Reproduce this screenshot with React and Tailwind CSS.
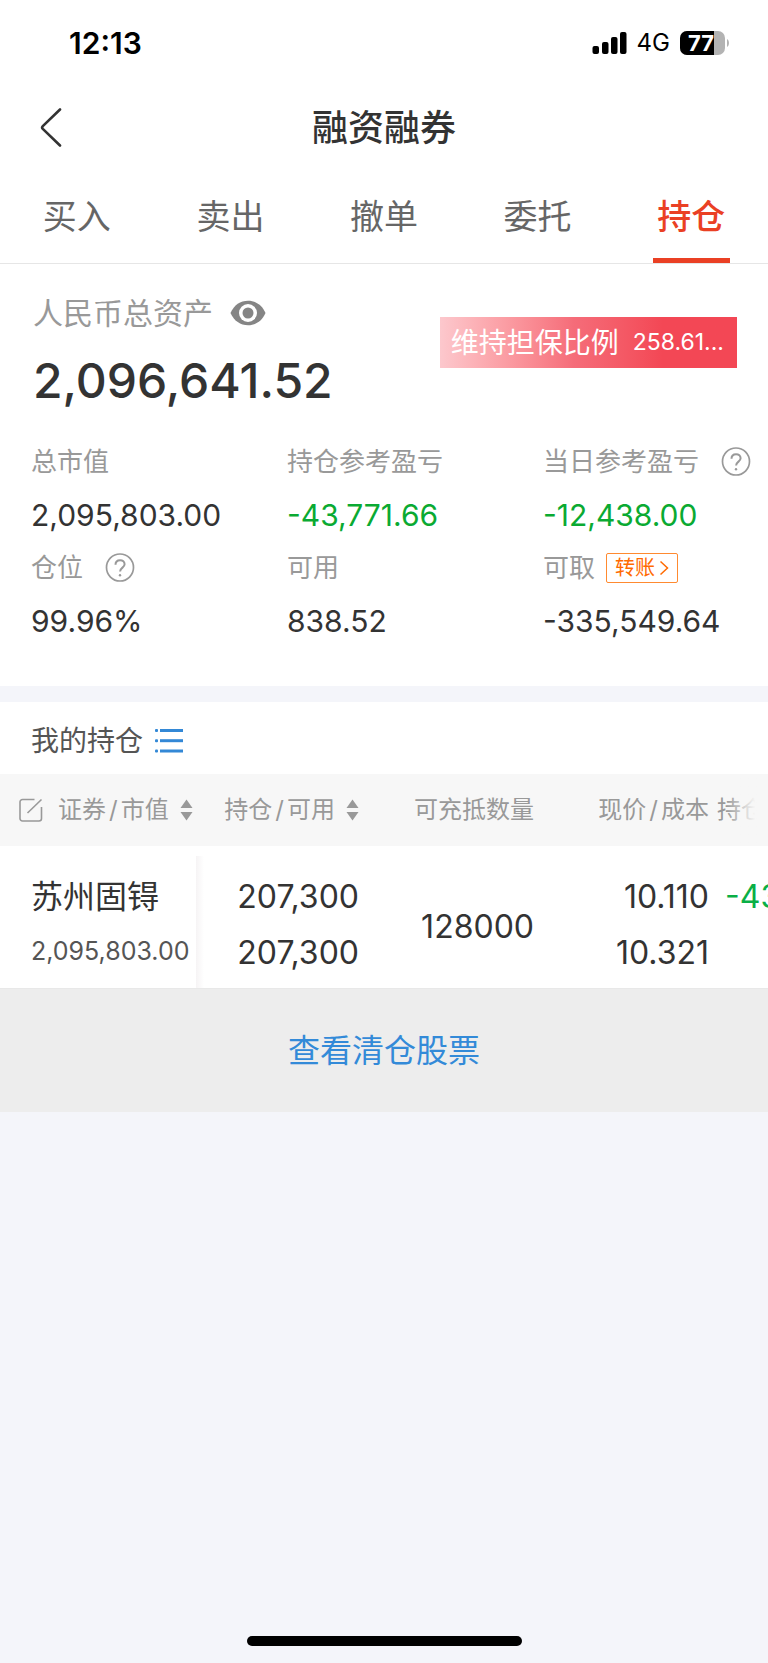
import React from "react";

const TABS = ["买入", "卖出", "撤单", "委托", "持仓"];

function StatusBar() {
  return (
    <div className="flex h-[86px] items-center justify-between pl-[69px] pr-[38px] text-black">
      <span className="text-3xl font-semibold leading-none">12:13</span>
      <div className="flex items-center">
        <svg width="36" height="24" viewBox="0 0 36 24" aria-hidden="true">
          <rect x="0.5" y="15" width="6.5" height="8" rx="2" />
          <rect x="10" y="11" width="6.5" height="12" rx="2" />
          <rect x="19" y="6" width="6.5" height="17" rx="2" />
          <rect x="28" y="1" width="6.5" height="22" rx="2" />
        </svg>
        <span className="ml-[9px] text-2xl leading-none">4G</span>
        <svg className="ml-[10px]" width="50" height="26" viewBox="0 0 50 26" aria-hidden="true">
          <defs>
            <clipPath id="cell">
              <rect x="0" y="1" width="45" height="24" rx="7" />
            </clipPath>
          </defs>
          <g clipPath="url(#cell)">
            <rect width="45" height="26" fill="#b3b3b3" />
            <rect width="34" height="26" fill="#000" />
          </g>
          <path d="M47 9c2.600 1.200 2.600 6.800 0 8z" fill="#b3b3b3" />
          <text x="21" y="21" textAnchor="middle" fontSize="22" fontWeight="700" fill="#fff">77</text>
        </svg>
      </div>
    </div>
  );
}

function HelpIcon() {
  return (
    <svg width="30" height="30" viewBox="0 0 30 30" fill="none" stroke="#999" strokeWidth="1.700" aria-hidden="true">
      <circle cx="15" cy="14.500" r="13.500" />
      <path d="M10.500 11.700c0-2.800 2-4.500 4.600-4.500s4.500 1.700 4.500 4.100c0 3.200-4.500 3.500-4.500 7.200" strokeWidth="2" />
      <circle cx="15" cy="22.300" r="1.200" fill="#999" stroke="none" />
    </svg>
  );
}

function SortIcon() {
  return (
    <svg width="13" height="22" viewBox="0 0 13 22" fill="#999" aria-hidden="true">
      <path d="M6.500 0.500 12.500 9H0.500z" />
      <path d="M6.500 21.500 12.500 13H0.500z" />
    </svg>
  );
}

function Metric({ label, value, tone = "text-[#333]", children }) {
  return (
    <div className="whitespace-nowrap pl-[31px]">
      <dt className="flex h-[53px] items-center text-[26px] text-[#999]">
        {label}
        {children}
      </dt>
      <dd className={`flex h-[53px] items-center text-3xl ${tone}`}>{value}</dd>
    </div>
  );
}

function Summary() {
  return (
    <section className="bg-white pb-[39px] pt-6">
      <div className="flex items-start justify-between pl-[33px] pr-[31px]">
        <div>
          <div className="flex h-[50px] items-center">
            <span className="text-3xl text-[#999]">人民币总资产</span>
            <button type="button" aria-label="隐藏资产" className="ml-[17px]">
              <svg width="36" height="26" viewBox="0 0 36 26" aria-hidden="true">
                <path d="M0.500 13C4 5 10.500 0.800 18 0.800S32 5 35.500 13C32 21 25.500 25.200 18 25.200S4 21 0.500 13z" fill="#858585" />
                <circle cx="18" cy="13" r="9" fill="#fff" />
                <circle cx="18" cy="13" r="5.500" fill="#858585" />
              </svg>
            </button>
          </div>
          <p className="flex h-[86px] items-center text-5xl font-medium text-[#333]">2,096,641.52</p>
        </div>
        <a
          href="#ratio"
          className="mt-[29px] flex h-[51px] items-center bg-linear-to-r from-[#fcc8cd] via-[#f56c79] via-45% to-[#f34755] to-75% pl-[11px] pr-[13px] text-white"
        >
          <span className="text-[28px]">维持担保比例</span>
          <span className="ml-[14px] text-[23px]">258.61...</span>
        </a>
      </div>
      <dl className="mt-[11px] grid grid-cols-3">
        <Metric label="总市值" value="2,095,803.00" />
        <Metric label="持仓参考盈亏" value="-43,771.66" tone="text-[#0aaa32]" />
        <Metric label="当日参考盈亏" value="-12,438.00" tone="text-[#0aaa32]">
          <button type="button" aria-label="盈亏说明" className="ml-[22px]"><HelpIcon /></button>
        </Metric>
        <Metric label="仓位" value="99.96%">
          <button type="button" aria-label="仓位说明" className="ml-[22px]"><HelpIcon /></button>
        </Metric>
        <Metric label="可用" value="838.52" />
        <Metric label="可取" value="-335,549.64">
          <button type="button" className="ml-[11px] flex h-[30px] items-center rounded-xs border border-[#ff8a30] px-2 text-xl text-[#ff6a00]">
            转账
            <svg className="ml-1" width="10" height="16" viewBox="0 0 10 16" fill="none" stroke="#ff6a00" strokeWidth="1.500" aria-hidden="true">
              <path d="M1.500 1.500 8.500 8l-7 6.500" />
            </svg>
          </button>
        </Metric>
      </dl>
    </section>
  );
}

function Holdings() {
  return (
    <section className="mt-4 bg-white">
      <div className="flex h-[72px] items-center pl-[31px] pt-[6px]">
        <h2 className="text-[28px] text-[#555]">我的持仓</h2>
        <button type="button" aria-label="切换列表" className="ml-3">
          <svg width="28" height="26" viewBox="0 0 28 26" fill="#3388d6" aria-hidden="true">
            <rect x="0" y="1" width="3" height="3" rx="1" />
            <rect x="5" y="1" width="23" height="3" />
            <rect x="0" y="11.200" width="3" height="3" rx="1" />
            <rect x="5" y="11.200" width="23" height="3" />
            <rect x="0" y="21.500" width="3" height="3" rx="1" />
            <rect x="5" y="21.500" width="23" height="3" />
          </svg>
        </button>
      </div>
      <div className="relative overflow-hidden">
        <table className="w-[884px] table-fixed whitespace-nowrap text-right">
          <colgroup>
            <col className="w-[196px]" />
            <col className="w-[163px]" />
            <col className="w-[175px]" />
            <col className="w-[175px]" />
            <col className="w-[175px]" />
          </colgroup>
          <thead>
            <tr className="h-[72px] bg-[#f7f7f7] text-2xl text-[#999]">
              <th className="p-0 font-normal">
                <div className="flex items-center pl-[19px]">
                  <button type="button" aria-label="编辑">
                    <svg width="24" height="24" viewBox="0 0 24 24" fill="none" stroke="#999" strokeWidth="1.600" aria-hidden="true">
                      <path d="M15.500 1.500H3.500a2.500 2.500 0 0 0-2.500 2.500v16.500a2.500 2.500 0 0 0 2.500 2.500h16.500a2.500 2.500 0 0 0 2.500-2.500V9" />
                      <path d="M8.500 15 22.500 1.500" />
                    </svg>
                  </button>
                  <button type="button" className="ml-[15px] flex items-center gap-[11px]">
                    <span>证券<span className="mx-[3px]">/</span>市值</span>
                    <SortIcon />
                  </button>
                </div>
              </th>
              <th className="p-0 font-normal">
                <button type="button" className="ml-auto flex items-center gap-[11px]">
                  <span>持仓<span className="mx-[3px]">/</span>可用</span>
                  <SortIcon />
                </button>
              </th>
              <th className="p-0 font-normal">可充抵数量</th>
              <th className="p-0 font-normal">现价<span className="mx-[3px]">/</span>成本</th>
              <th className="py-0 pl-2 pr-0 text-left font-normal">持仓盈亏</th>
            </tr>
          </thead>
          <tbody>
            <tr className="h-[142px] text-[32px] text-[#333]">
              <td className="p-0 pt-[10px] text-left">
                <div className="relative h-[132px] pl-[31px] pt-[14px]">
                  <a href="#stock" className="block h-[54px] leading-[54px]">苏州固锝</a>
                  <span className="block h-[54px] text-[25px] leading-[54px] text-[#555]">2,095,803.00</span>
                  <div className="absolute -right-2 bottom-0 top-0 w-2 bg-linear-to-r from-[#f6f4f5] to-white" />
                </div>
              </td>
              <td className="p-0 pt-4 leading-[56px]">
                <div>207,300</div>
                <div>207,300</div>
              </td>
              <td className="p-0 pt-5">128000</td>
              <td className="p-0 pt-4 leading-[56px]">
                <div>10.110</div>
                <div>10.321</div>
              </td>
              <td className="pb-0 pl-4 pr-0 pt-[23px] text-left align-top leading-[56px] text-[#0aaf46]">-43,771.66</td>
            </tr>
          </tbody>
        </table>
        <div className="absolute right-0 top-0 h-[72px] w-[42px] bg-linear-to-r from-[#f7f7f7]/0 to-[#f7f7f7] to-70%" />
      </div>
      <button type="button" className="flex h-[124px] w-full items-center justify-center border-t border-[#e8e8e8] bg-[#ededed] text-[32px] text-[#338ad8]">
        查看清仓股票
      </button>
    </section>
  );
}

export default function App() {
  return (
    <div className="flex min-h-screen flex-col bg-[#f4f5fa] font-['Inter','Noto_Sans_CJK_SC',sans-serif]">
      <header className="bg-white">
        <StatusBar />
        <div className="grid h-[84px] grid-cols-[1fr_auto_1fr] items-center">
          <button type="button" aria-label="返回" className="ml-10 justify-self-start">
            <svg width="24" height="40" viewBox="0 0 24 40" fill="none" stroke="#333" strokeWidth="2.600" strokeLinecap="round" strokeLinejoin="round" aria-hidden="true">
              <path d="M20 1.500 2.800 18.100a2 2 0 0 0 0 2.800L20 37.500" />
            </svg>
          </button>
          <h1 className="text-4xl font-medium text-[#333]">融资融券</h1>
        </div>
        <nav className="grid h-[94px] grid-cols-5 border-b border-[#e6e6e6]">
          {TABS.map((tab) => {
            const active = tab === "持仓";
            return (
              <button
                key={tab}
                type="button"
                aria-current={active ? "page" : undefined}
                className={`flex flex-col items-center justify-between text-[34px] ${active ? "font-medium text-[#ea4024]" : "text-[#666]"}`}
              >
                <span className="h-[88px] leading-[93px]">{tab}</span>
                {active && <span className="h-[5px] w-[77px] bg-[#ea4024]" />}
              </button>
            );
          })}
        </nav>
      </header>
      <main>
        <Summary />
        <Holdings />
      </main>
      <div className="mx-auto mb-[17px] mt-auto h-[10px] w-[275px] rounded-full bg-black" />
    </div>
  );
}
